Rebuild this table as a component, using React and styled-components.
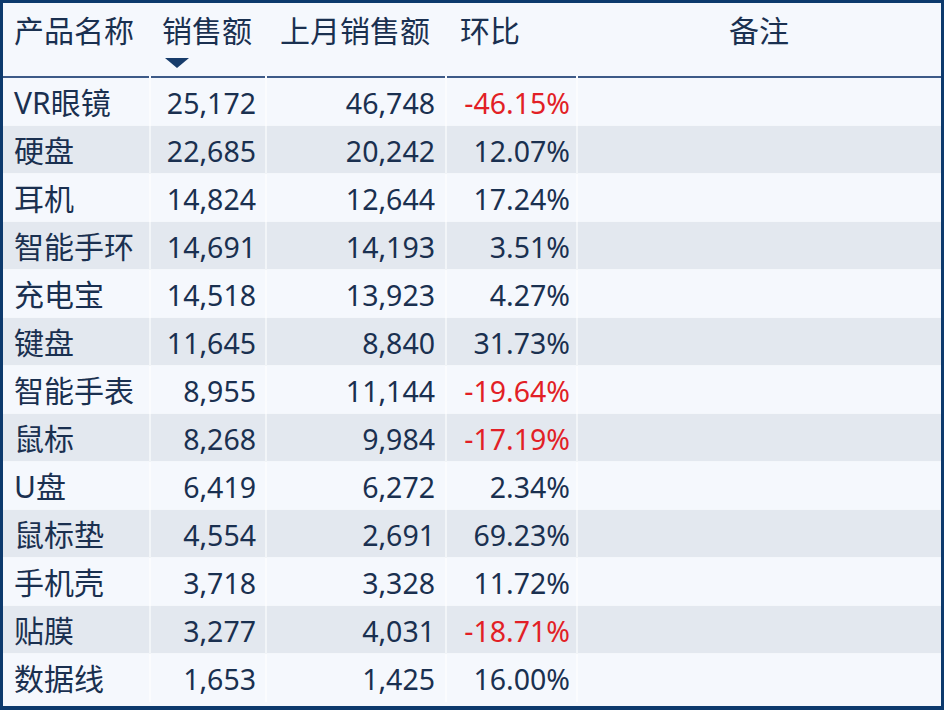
import styled, { createGlobalStyle } from "styled-components";

const GlobalStyle = createGlobalStyle`
  html, body {
    margin: 0;
    padding: 0;
    background: #f5f8fd;
  }
  * { box-sizing: border-box; }
`

const Frame = styled.div`
  width: 944px;
  height: 710px;
  border: 3px solid #0d3a6d;
  border-bottom-width: 4px;
  background: #f5f8fd;
  overflow: hidden;
  font-family: "Noto Sans", "Noto Sans CJK SC", sans-serif;
  color: #1a3050;
`
const Table = styled.table`
  width: 938px;
  border-collapse: collapse;
  table-layout: fixed;
`
const HeadRow = styled.tr`
  height: 74px;
  border-bottom: 2px solid #3d5a88;
`
const Th = styled.th`
  font-weight: normal;
  font-size: 30px;
  line-height: 40px;
  vertical-align: top;
  padding: 8px 0 0 ${p => p.$pl || 0}px;
  text-align: ${p => p.$center ? "center" : "left"};
  white-space: nowrap;
`
const SortMark = styled.div`
  width: 0;
  height: 0;
  margin: 7px 0 0 3px;
  border-left: 12px solid transparent;
  border-right: 12px solid transparent;
  border-top: 10px solid #173c6b;
`
const Row = styled.tr`
  height: 48px;
  background: ${p => p.$alt ? "#e3e8ef" : "transparent"};
  border-top: 1px solid #f4f7fb;
`
const Td = styled.td`
  font-size: ${p => p.$left ? 30 : 28.5}px;
  line-height: 44px;
  padding: 3px ${p => p.$pr || 0}px 0 ${p => p.$pl || 0}px;
  text-align: ${p => p.$left ? "left" : "right"};
  white-space: nowrap;
  color: ${p => p.$neg ? "#e21f26" : "inherit"};
  border-right: 2px solid rgba(255, 255, 255, 0.55);
  &:last-child { border-right: none; }
`

const rows = [
  ["VR眼镜", "25,172", "46,748", "-46.15%"],
  ["硬盘", "22,685", "20,242", "12.07%"],
  ["耳机", "14,824", "12,644", "17.24%"],
  ["智能手环", "14,691", "14,193", "3.51%"],
  ["充电宝", "14,518", "13,923", "4.27%"],
  ["键盘", "11,645", "8,840", "31.73%"],
  ["智能手表", "8,955", "11,144", "-19.64%"],
  ["鼠标", "8,268", "9,984", "-17.19%"],
  ["U盘", "6,419", "6,272", "2.34%"],
  ["鼠标垫", "4,554", "2,691", "69.23%"],
  ["手机壳", "3,718", "3,328", "11.72%"],
  ["贴膜", "3,277", "4,031", "-18.71%"],
  ["数据线", "1,653", "1,425", "16.00%"],
]

export default function App() {
  return (
    <>
      <GlobalStyle />
      <Frame>
        <Table>
          <colgroup>
            <col style={{ width: 147 }} />
            <col style={{ width: 116 }} />
            <col style={{ width: 180 }} />
            <col style={{ width: 131 }} />
            <col />
          </colgroup>
          <thead>
            <HeadRow>
              <Th $pl={11}>产品名称</Th>
              <Th $pl={12}>
                销售额
                <SortMark />
              </Th>
              <Th $pl={14}>上月销售额</Th>
              <Th $pl={14}>环比</Th>
              <Th $center>备注</Th>
            </HeadRow>
          </thead>
          <tbody>
            {rows.map((r, i) => (
              <Row key={r[0]} $alt={i % 2 === 1}>
                <Td $left $pl={11}>{r[0]}</Td>
                <Td $pr={9}>{r[1]}</Td>
                <Td $pr={10}>{r[2]}</Td>
                <Td $pr={6} $neg={r[3].startsWith("-")}>{r[3]}</Td>
                <Td />
              </Row>
            ))}
          </tbody>
        </Table>
      </Frame>
    </>
  )
}
